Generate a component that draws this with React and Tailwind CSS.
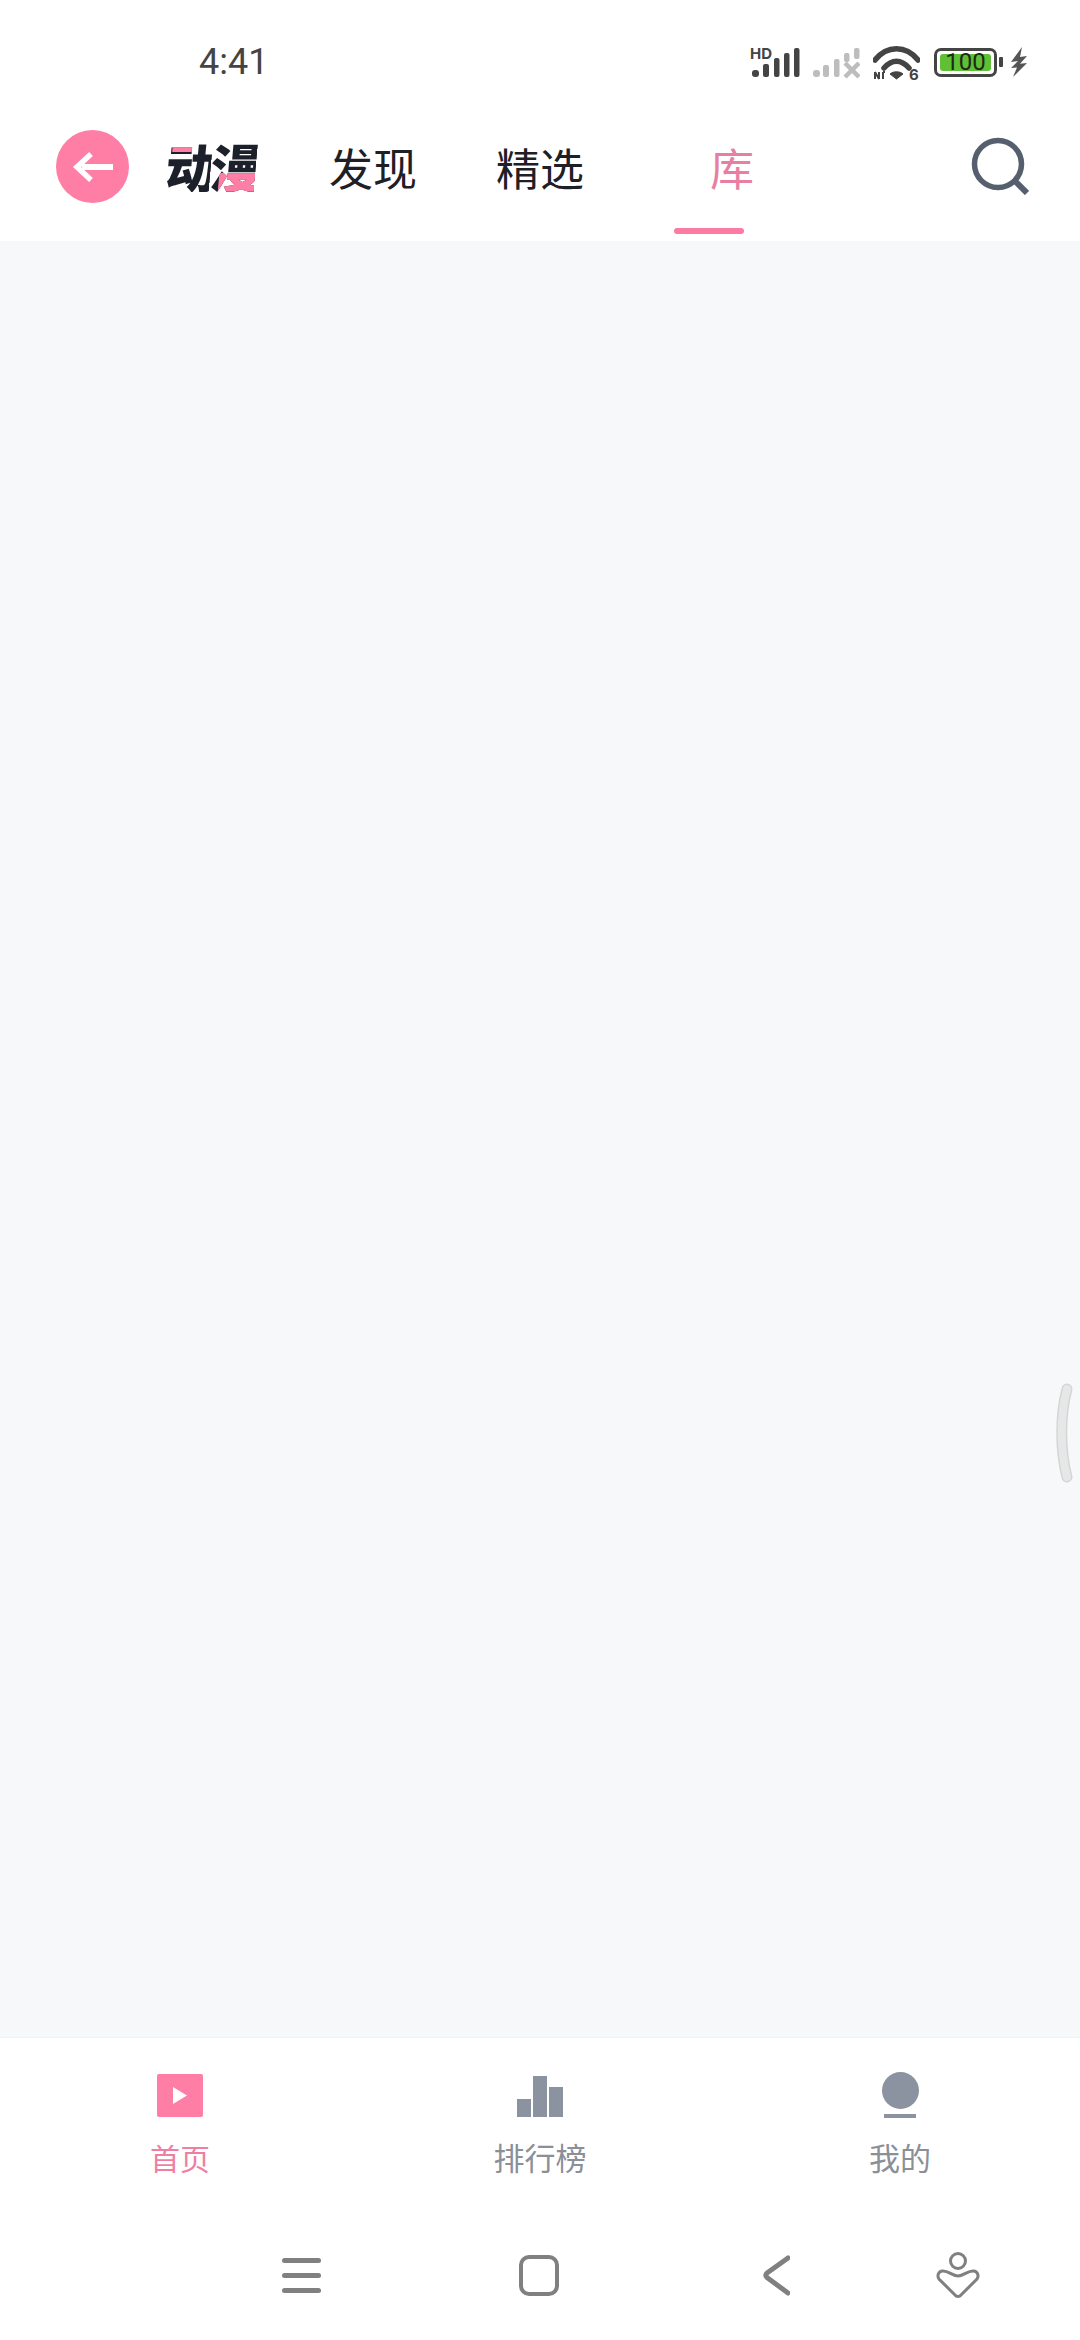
const cjk = "font-['Noto_Sans_CJK_SC','Noto_Sans',sans-serif]";

function SignalHd() {
  return (
    <svg width="50" height="36" viewBox="750 44 50 36" fill="#444">
      <text x="750" y="59" fontFamily="Inter, sans-serif" fontWeight="700" fontSize="15">HD</text>
      <rect x="752" y="70" width="7" height="7" rx="3" />
      <rect x="763" y="64" width="6" height="13" rx="2" />
      <rect x="774" y="58" width="5.500" height="19" rx="2" />
      <rect x="784" y="53" width="5.500" height="24" rx="2" />
      <rect x="794" y="48" width="5.500" height="29" rx="2" />
    </svg>
  );
}

function SignalOff() {
  return (
    <svg width="48" height="36" viewBox="812 44 48 36" fill="#bdbdbd">
      <rect x="813" y="70" width="7" height="7" rx="3" />
      <rect x="823" y="65" width="6" height="12" rx="2" />
      <rect x="834" y="59" width="5.500" height="18" rx="2" />
      <rect x="844" y="53" width="5.500" height="9" rx="2" />
      <rect x="854" y="48" width="5.500" height="11" rx="2" />
      <path d="M845 63l14 14M859 63l-14 14" stroke="#bdbdbd" strokeWidth="4.500" fill="none" />
    </svg>
  );
}

function Wifi() {
  return (
    <svg className="mt-[8px]" width="47" height="44" viewBox="873 44 47 44" fill="none" stroke="#444">
      <path d="M875 60C887 45 906 45 918 60" strokeWidth="5.500" strokeLinecap="round" />
      <path d="M884 68C892 59 901 59 909 68" strokeWidth="5.500" strokeLinecap="round" />
      <path d="M890 74c3-3 10-3 13 0l-6.500 5z" fill="#444" strokeWidth="1" />
      <path d="M875 72v7M875 72l4 7M879 72v7M883 72v7M883 72h2" strokeWidth="2" />
      <text x="909" y="80" fontFamily="Inter, sans-serif" fontWeight="700" fontSize="15" fill="#444" stroke="none">6</text>
    </svg>
  );
}

function Battery() {
  return (
    <div className="flex items-center">
      <div className="flex h-[29px] w-[63px] items-center justify-center rounded-[7px] border-[3px] border-[#444] p-[3px]">
        <div className="flex h-full w-full items-center justify-center rounded-[3px] bg-[#5fbf35] text-[24px] leading-none text-[#1d2a14] font-['Roboto',sans-serif]">
          100
        </div>
      </div>
      <div className="ml-[2px] h-[10px] w-[4px] rounded-[1px] bg-[#444]" />
    </div>
  );
}

function Bolt() {
  return (
    <svg width="18" height="30" viewBox="0 0 18 30" fill="#555">
      <path d="M12 0L1 15l7-1-7 7 6-.5L3 30 17 16l-7 .8 7-7.800-7 1z" />
    </svg>
  );
}

function StatusBar() {
  return (
    <div className="flex h-[90px] items-start justify-between bg-white pl-[199px] pr-[52px] pt-[40px]">
      <span className="text-[36px] leading-[44px] text-[#444] font-['Roboto',sans-serif]">4:41</span>
      <div className="flex h-[44px] items-center">
        <SignalHd />
        <div className="ml-[12px]"><SignalOff /></div>
        <div className="ml-[13px]"><Wifi /></div>
        <div className="ml-[14px]"><Battery /></div>
        <div className="ml-[7px]"><Bolt /></div>
      </div>
    </div>
  );
}

function Tab({ label, width, active }) {
  return (
    <div className={`relative flex h-full items-center justify-center ${width}`}>
      <span
        className={`pt-[3px] text-[44px] leading-none ${active ? "pl-[46px] text-[#e87fa2]" : "text-[#1e2026]"} ${cjk}`}
      >
        {label}
      </span>
      {active && <div className="absolute bottom-[7px] h-[6px] w-[70px] rounded-full bg-[#fb7ba2]" />}
    </div>
  );
}

function Header() {
  return (
    <header className="flex h-[151px] items-center bg-white pl-[56px]">
      <div className="mt-[2px] flex h-[73px] w-[73px] items-center justify-center rounded-full bg-[#ff7ea6]">
        <svg width="42" height="32" viewBox="0 0 42 32" fill="none" stroke="white">
          <path d="M10 16H41" strokeWidth="6" />
          <path d="M19 3L5 16l14 13" strokeWidth="5.500" />
        </svg>
      </div>
      <div className={`ml-[37px] flex w-[89px] -skew-x-[5deg] text-[52px] font-black leading-none tracking-[-7px] ${cjk}`}>
        <span className="bg-[linear-gradient(#ff7ea6,#ff7ea6),linear-gradient(#1c202b,#1c202b)] bg-[size:44%_24%,100%_100%] bg-[position:20%_0,0_0] bg-no-repeat bg-clip-text text-transparent">
          动
        </span>
        <span className="bg-[linear-gradient(#ff7ea6,#ff7ea6),linear-gradient(#1c202b,#1c202b)] bg-[size:80%_36%,100%_100%] bg-[position:100%_100%,0_0] bg-no-repeat bg-clip-text text-transparent">
          漫
        </span>
      </div>
      <nav className="ml-[73px] flex h-full">
        <Tab label="发现" width="w-[90px]" />
        <Tab label="精选" width="w-[90px] ml-[77px]" />
        <Tab label="库" width="w-[70px] ml-[89px]" active />
      </nav>
      <svg className="ml-[227px]" width="58" height="58" viewBox="0 0 58 58" fill="none" stroke="#555f6e">
        <circle cx="27" cy="27" r="23.500" strokeWidth="5.500" />
        <path d="M43 43l13 13" strokeWidth="6" />
      </svg>
    </header>
  );
}

function BottomNav() {
  return (
    <div className="grid h-[147px] grid-cols-3 border-t border-[#f1f2f3] bg-white">
      <div className="flex flex-col items-center pt-[36px]">
        <div className="flex h-[43px] w-[46px] items-center justify-center rounded-[2px] bg-[#ff7ea6]">
          <svg width="14" height="17" viewBox="0 0 14 17" fill="white">
            <path d="M0 0l14 8.500L0 17z" />
          </svg>
        </div>
        <span className={`mt-[21px] text-[30px] leading-[38px] text-[#ee7fa3] ${cjk}`}>首页</span>
      </div>
      <div className="flex flex-col items-center pt-[36px]">
        <div className="flex h-[43px] items-end gap-[2px]">
          <div className="h-[18px] w-[14px] bg-[#8b93a1]" />
          <div className="h-[41px] w-[14px] bg-[#8b93a1]" />
          <div className="h-[30px] w-[14px] bg-[#8b93a1]" />
        </div>
        <span className={`mt-[21px] text-[31px] leading-[38px] text-[#8a8f98] ${cjk}`}>排行榜</span>
      </div>
      <div className="flex flex-col items-center pt-[34px]">
        <div className="h-[37px] w-[37px] rounded-full bg-[#8b93a1]" />
        <div className="mt-[5px] h-[4px] w-[32px] bg-[#8b93a1]" />
        <span className={`mt-[20px] text-[31px] leading-[38px] text-[#8a8f98] ${cjk}`}>我的</span>
      </div>
    </div>
  );
}

function SystemNav() {
  return (
    <div className="flex h-[156px] items-start bg-white pl-[282px] pt-[71px]">
      <div className="mt-[3px] flex w-[39px] flex-col gap-[10px]">
        <div className="h-[5px] rounded-full bg-[#808080]" />
        <div className="h-[5px] rounded-full bg-[#808080]" />
        <div className="h-[5px] rounded-full bg-[#808080]" />
      </div>
      <div className="ml-[198px] h-[41px] w-[40px] rounded-[10px] border-[4px] border-[#808080]" />
      <svg className="ml-[204px]" width="27" height="41" viewBox="0 0 27 41" fill="none" stroke="#808080" strokeWidth="5" strokeLinecap="round" strokeLinejoin="round">
        <path d="M25 3L4 18c-1.500 1.500-1.500 3 0 4.500L25 38" />
      </svg>
      <svg className="ml-[146px] -mt-[3px]" width="44" height="46" viewBox="0 0 44 46" fill="none" stroke="#808080" strokeWidth="3">
        <ellipse cx="22" cy="9" rx="7.500" ry="7.500" />
        <path d="M6 19c6-1 10 5 16 5s10-6 16-5c4 1 5 5 3 8L25 43c-1.500 2-4.500 2-6 0L3 27c-2-3-1-7 3-8z" />
      </svg>
    </div>
  );
}

export default function App() {
  return (
    <div className="relative flex h-[2340px] w-[1080px] flex-col overflow-hidden bg-white">
      <StatusBar />
      <Header />
      <main className="flex-1 bg-[#f7f8fa]" />
      <BottomNav />
      <SystemNav />
      {/* side handle sits over the page */}
      <svg className="absolute right-0 top-[1380px]" width="30" height="108" viewBox="0 0 30 108" fill="none" strokeLinecap="round">
        <path d="M17 9C10 35 10 70 17 97" stroke="#d4d6d6" strokeWidth="11" />
        <path d="M17 9C10 35 10 70 17 97" stroke="#e6e8e7" strokeWidth="8" />
      </svg>
    </div>
  );
}
